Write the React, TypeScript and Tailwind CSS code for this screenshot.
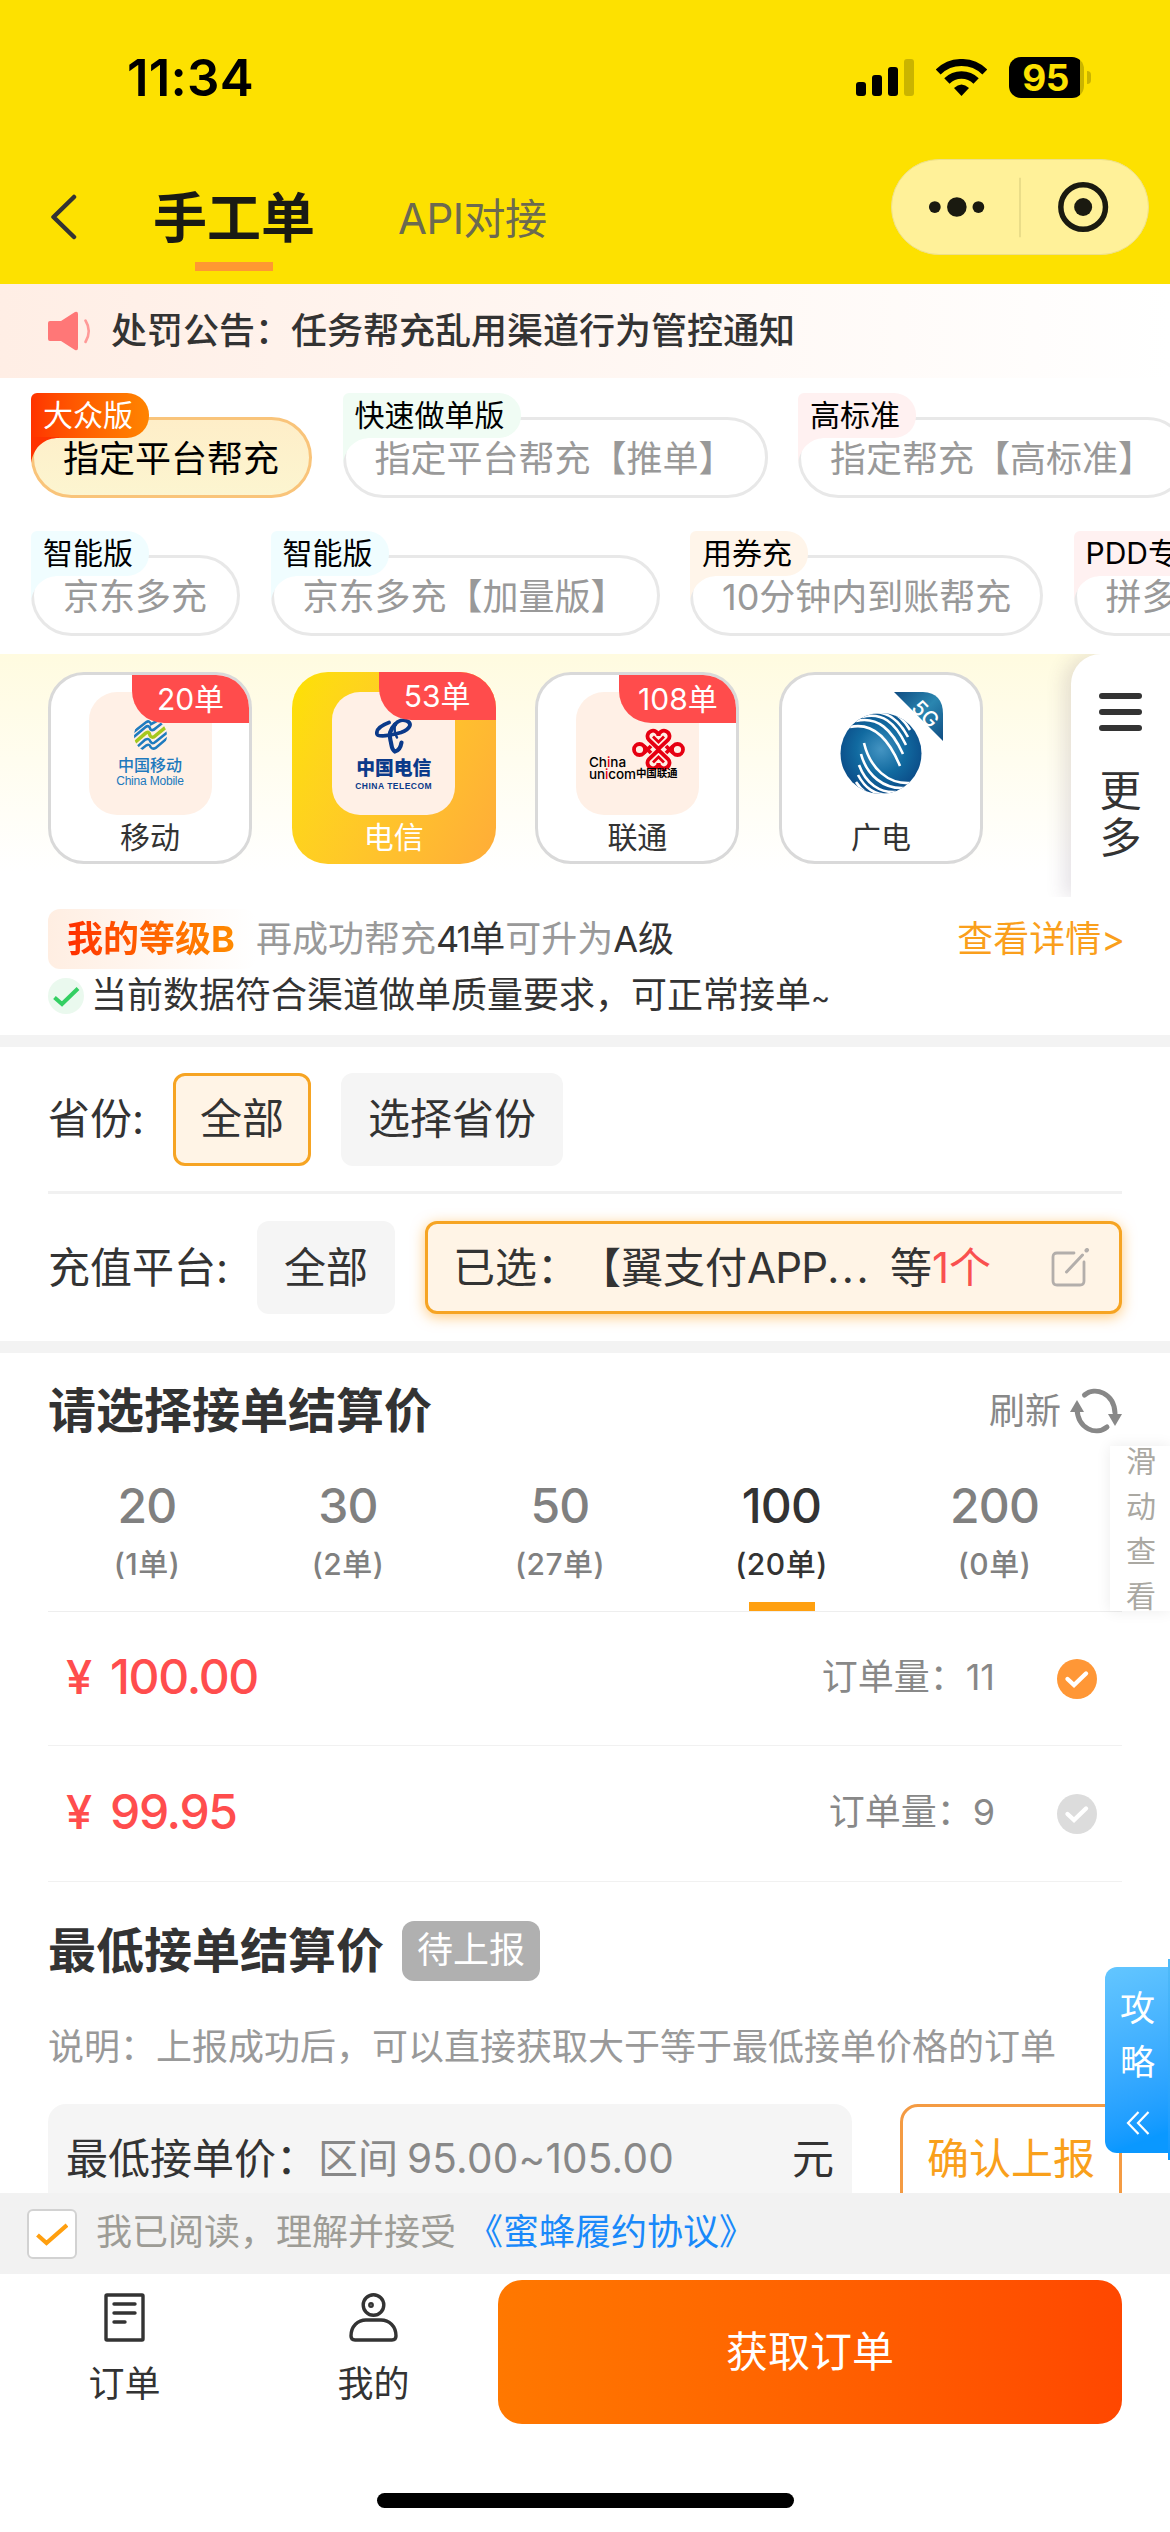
import { useState } from 'react';
import clsx from 'clsx';

interface Channel {
  tag: string;
  name: string;
  width: string;
  tagClass: string;
  tailClass: string;
  active?: boolean;
}

const channelsTop: Channel[] = [
  { tag: '大众版', name: '指定平台帮充', width: 'w-[281px]', tagClass: 'bg-linear-to-r from-[#ff3300] to-[#ff8400] text-white', tailClass: 'fill-[#ff3300]', active: true },
  { tag: '快速做单版', name: '指定平台帮充【推单】', width: 'w-[425px]', tagClass: 'bg-[#f0fcf4]', tailClass: 'fill-[#f0fcf4]' },
  { tag: '高标准', name: '指定帮充【高标准】', width: 'w-[390px]', tagClass: 'bg-[#fff1f1]', tailClass: 'fill-[#fff1f1]' },
];

const channelsBottom: Channel[] = [
  { tag: '智能版', name: '京东多充', width: 'w-[209px]', tagClass: 'bg-[#f0fdff]', tailClass: 'fill-[#f0fdff]' },
  { tag: '智能版', name: '京东多充【加量版】', width: 'w-[389px]', tagClass: 'bg-[#f0fdff]', tailClass: 'fill-[#f0fdff]' },
  { tag: '用券充', name: '10分钟内到账帮充', width: 'w-[353px]', tagClass: 'bg-[#fff5ea]', tailClass: 'fill-[#fff5ea]' },
  { tag: 'PDD专享', name: '拼多多充', width: 'w-[209px]', tagClass: 'bg-[#fff1f1]', tailClass: 'fill-[#fff1f1]' },
];

const amounts = [
  { value: 20, count: 1, width: 'w-[198px]' },
  { value: 30, count: 2, width: 'w-[204px]' },
  { value: 50, count: 27, width: 'w-[220px]' },
  { value: 100, count: 20, width: 'w-[223px]' },
  { value: 200, count: 0, width: 'w-[203px]' },
];

const prices = [
  { price: '100.00', orders: 11, height: 'h-[134px]' },
  { price: '99.95', orders: 9, height: 'h-[136px]' },
];

function StatusBar() {
  return (
    <div className="flex h-[154px] items-start justify-between pl-[127px] pr-[79px]">
      <div className="mt-[48px] text-[51px] font-semibold leading-[60px] tracking-[0.2px] text-black">11:34</div>
      <div className="mt-[57px] flex items-start">
        <svg className="mt-[2px] h-[37px] w-[58px]" viewBox="0 0 58 37">
          <rect x="0" y="23" width="10" height="14" rx="3" />
          <rect x="16" y="16" width="10" height="21" rx="3" />
          <rect x="32" y="8" width="10" height="29" rx="3" />
          <rect x="48" y="0" width="10" height="37" rx="3" fill="#cab400" />
        </svg>
        <svg className="ml-[22px] mt-[2px] h-[37px] w-[51px]" viewBox="0 0 51 37">
          <path d="M2.2 12.9A33.5 33.5 0 0 1 48.8 12.9" fill="none" stroke="#000" strokeWidth="7" />
          <path d="M10.9 21.9A21 21 0 0 1 40.1 21.9" fill="none" stroke="#000" strokeWidth="7.6" />
          <path d="M25.5 37L18 29Q25.500 22 33 29Z" />
        </svg>
        <div className="ml-[22px] h-[41px] w-[75px] rounded-[12px] bg-linear-to-r from-black from-95% to-[#cab400] to-95% pr-[2px] text-center text-[37px] font-bold leading-[41px] tracking-[-0.5px] text-[#fde100]">
          95
        </div>
        <div className="ml-[3px] mt-[14px] h-[13px] w-[4px] rounded-r-full bg-[#cab400]" />
      </div>
    </div>
  );
}

function Header() {
  return (
    <header className="h-[284px] shrink-0 bg-[#fde100]">
      <StatusBar />
      <div className="flex h-[130px] items-start pl-[50px] pr-[21px]">
        <svg className="mt-[40px] h-[46px] w-[28px]" viewBox="0 0 28 46" fill="none" stroke="#333" strokeWidth="4.500" strokeLinecap="round" strokeLinejoin="round">
          <path d="M24 3L3.500 23L24 43" />
        </svg>
        <div className="ml-[75px] mt-[31px] flex flex-col items-center">
          <div className="text-[54px] font-bold leading-[68px] text-[#1a1a14]">手工单</div>
          <div className="mt-[9px] h-[9px] w-[78px] bg-[#ff9832]" />
        </div>
        <div className="ml-[83px] mt-[39px] text-[42px] leading-[52px] tracking-[-0.5px] text-[#6c6a50]">API对接</div>
        <div className="ml-auto mt-[5px] flex h-[96px] w-[258px] items-center rounded-full border border-[#eee08a] bg-[#fff199]">
          <svg className="h-full w-full" viewBox="0 0 258 96">
            <g fill="#1a1a10">
              <circle cx="42" cy="48" r="6" />
              <circle cx="64.500" cy="48" r="10" />
              <circle cx="86.500" cy="48" r="6" />
              <circle cx="193.500" cy="48" r="9.200" />
            </g>
            <path d="M129 18V79" stroke="#e3d684" strokeWidth="1.500" />
            <circle cx="193.500" cy="48" r="22.800" fill="none" stroke="#1a1a10" strokeWidth="5.600" />
          </svg>
        </div>
      </div>
    </header>
  );
}

function ChannelChip({ channel }: { channel: Channel }) {
  return (
    <div className={clsx('relative shrink-0 pt-[24px]', channel.width)}>
      <div
        className={clsx(
          'h-[81px] overflow-hidden whitespace-nowrap rounded-full border-[3px] pl-[29px] text-[36px] leading-[78px]',
          channel.active ? 'border-[#f9c47a] bg-linear-to-b from-[#feeec8] to-[#fcf5d0] text-black' : 'border-[#e8e8e8] text-[#999]',
        )}
      >
        {channel.name}
      </div>
      <div className="absolute left-0 top-0">
        <div className={clsx('h-[45px] whitespace-nowrap rounded-r-[22px] rounded-tl-[6px] pl-[12px] pr-[16px] text-[30px] leading-[44px]', channel.tagClass, !channel.active && 'text-black')}>
          {channel.tag}
        </div>
        <svg className={clsx('-mt-px h-[26px] w-[28px]', channel.tailClass)} viewBox="0 0 28 26">
          <path d="M0 0H28V1C14 1 3 9 0 26Z" />
        </svg>
      </div>
    </div>
  );
}

function MobileLogo() {
  return (
    <div className="flex h-full flex-col items-center pt-[27px] text-[#2079bd]">
      <svg className="h-[33px] w-[33px]" viewBox="0 0 32 32" fill="none" strokeWidth="2.500">
        <clipPath id="mobileClip">
          <circle cx="16" cy="16" r="16" />
        </clipPath>
        <g clipPath="url(#mobileClip)" stroke="#1f7bbf">
          <path d="M-1 13L12 3Q15 1 16.500 5L22 2" />
          <path d="M-1 18L11 8Q14.500 5 16 10Q18 12 21 9L30 2" />
          <path d="M0 23.500L11 14Q14.500 11 15.500 16Q17.500 19.500 21 16L32 7" stroke="#a5c81e" strokeWidth="3.400" />
          <path d="M2 28L11 20Q14.500 18 16 22Q18 25 21 22L33 12.500" />
          <path d="M5 31L12 25.500Q15 24 16 27Q18 30 21 28L33 18" />
        </g>
      </svg>
      <div className="mt-[3px] text-[16px] font-medium leading-[20px]">中国移动</div>
      <div className="whitespace-nowrap font-['Liberation_Sans'] text-[12px] leading-[13px] tracking-[-0.2px]">China Mobile</div>
    </div>
  );
}

function TelecomLogo() {
  return (
    <div className="flex h-full flex-col items-center pt-[26px] text-[#0b3a8a]">
      <svg className="h-[36px] w-[38px]" viewBox="0 0 38 35" fill="none" stroke="#0b3a8a" strokeLinecap="round">
        <path d="M14 4C6 7 1 11 2 15.500C3 19 16 17 26 14C36 10 37 5 32 2.500C28 1 23 2 20 6" strokeWidth="3.800" />
        <path d="M20 6C14 12 14 17 15.500 22C17 27 16 31 20 33C25 32 26 27 26.500 24" strokeWidth="4.200" />
        <path d="M20 6C19 12 20 16 22 19" strokeWidth="2.400" />
      </svg>
      <div className="mt-[2px] text-[18.800px] font-black leading-[26px]">中国电信</div>
      <div className="whitespace-nowrap font-['Liberation_Sans'] text-[8.500px] font-bold leading-[9px] tracking-[0.5px]">CHINA TELECOM</div>
    </div>
  );
}

function UnicomLogo() {
  return (
    <div className="flex h-full flex-col pl-[13px] pt-[36px] text-black">
      <svg className="ml-[43px] h-[43px] w-[53px]" viewBox="0 0 53 43" fill="none" stroke="#e60012" strokeWidth="3.800">
        <path d="M26.500 21L17 12A5.500 5.500 0 1 1 26.500 8A5.500 5.500 0 1 1 36 12Z" />
        <path d="M26.500 22L17 31A5.500 5.500 0 1 0 26.500 35A5.500 5.500 0 1 0 36 31Z" />
        <path d="M21 8.500L26.500 14L32 8.500M21 34.500L26.500 29L32 34.500" strokeWidth="2.800" />
        <circle cx="7.500" cy="21.500" r="5.500" />
        <circle cx="45.500" cy="21.500" r="5.500" />
        <path d="M12 18L19 25M12 25L19 18M41 18L34 25M41 25L34 18" />
      </svg>
      <div className="-mt-[16px] text-[13.500px] font-medium leading-[14px]">
        Ch<span className="text-[#e60012]">i</span>na
      </div>
      <div className="-mt-[2px] flex items-center whitespace-nowrap text-[13.500px] font-medium leading-[14px] tracking-[-0.1px]">
        un<span className="text-[#e60012]">i</span>com<span className="text-[10.500px] font-bold">中国联通</span>
      </div>
    </div>
  );
}

function BroadcastLogo() {
  return (
    <svg className="h-[123px] w-[123px]" viewBox="0 0 123 123">
      <defs>
        <radialGradient id="globe" cx="0.5" cy="0.45" r="0.6">
          <stop offset="0" stopColor="#4494c2" />
          <stop offset="0.5" stopColor="#116aa0" />
          <stop offset="1" stopColor="#0a4683" />
        </radialGradient>
        <linearGradient id="corner" x1="0" y1="0" x2="1" y2="1">
          <stop offset="0" stopColor="#0f4c82" />
          <stop offset="0.5" stopColor="#2a86b0" />
          <stop offset="1" stopColor="#0f4c82" />
        </linearGradient>
        <clipPath id="globeClip">
          <circle cx="61" cy="61.500" r="40.500" />
        </clipPath>
      </defs>
      <circle cx="61" cy="61.500" r="40.500" fill="url(#globe)" />
      <g clipPath="url(#globeClip)" fill="none" stroke="#fff" strokeWidth="2.600">
        <path d="M30 35C52 30 68 45 80 74" />
        <path d="M36 29C58 24 72 38 83 62" />
        <path d="M42 25C62 20 75 30 86 53" />
        <path d="M50 21C66 18 78 26 88 45" />
        <path d="M60 18C72 18 82 24 90 38" />
        <path d="M44 51C50 76 68 93 92 91" />
        <path d="M41 62C47 84 64 97 84 96" />
        <path d="M39 73C46 92 60 101 76 100" />
        <path d="M38 83C45 96 54 103 70 103" />
        <path d="M36 90C42 99 48 104 60 106" />
      </g>
      <path d="M74 0H103Q123 1 123 22V49Z" fill="url(#corner)" />
      <text x="0" y="0" transform="translate(90 17) rotate(45)" fill="#fff" fontFamily="Inter" fontSize="21" fontWeight="500">5G</text>
    </svg>
  );
}

const carriers = [
  { name: '移动', orders: 20, logo: <MobileLogo /> },
  { name: '电信', orders: 53, logo: <TelecomLogo /> },
  { name: '联通', orders: 108, logo: <UnicomLogo /> },
  { name: '广电', orders: 0, logo: <BroadcastLogo /> },
];

function CarrierSection() {
  const [selected, setSelected] = useState('电信');

  return (
    <section className="flex h-[243px] bg-linear-to-b from-[#fffbe0] to-white to-90%">
      <div className="flex flex-1 gap-[39.700px] pl-[48px] pt-[18px]">
        {carriers.map((c) => {
          const active = c.name === selected;
          return (
            <button
              key={c.name}
              onClick={() => setSelected(c.name)}
              className={clsx(
                'relative flex h-[192px] w-[204px] shrink-0 flex-col items-center overflow-hidden rounded-[36px]',
                active ? 'bg-linear-115 from-[#fde100] to-[#ffac38] pt-[20px] text-white' : 'border-[3px] border-[#d9d9d9] bg-white pt-[17px] text-[#333]',
              )}
            >
              <div className={clsx('h-[123px] w-[123px] rounded-[28px] text-left', c.orders > 0 && 'bg-[#fff0e6]')}>{c.logo}</div>
              <div className="mt-[3px] text-[30px] leading-[38px]">{c.name}</div>
              {c.orders > 0 && (
                <div className="absolute right-0 top-0 h-[48px] w-[117px] rounded-bl-[32px] bg-[#ff4c4c] text-center text-[30px] leading-[48px] text-white">
                  {c.orders}单
                </div>
              )}
            </button>
          );
        })}
      </div>
      <div className="flex w-[99px] flex-col items-center rounded-tl-[30px] bg-white pt-[39px] text-[#333] [box-shadow:-8px_0_18px_rgba(70,50,80,0.13)] [clip-path:inset(0_0_0_-40px)]">
        <div className="flex flex-col gap-[10px]">
          <div className="h-[6px] w-[43px] rounded-full bg-[#333]" />
          <div className="h-[6px] w-[43px] rounded-full bg-[#333]" />
          <div className="h-[6px] w-[43px] rounded-full bg-[#333]" />
        </div>
        <div className="mt-[36px] w-[42px] text-[42px] leading-[47px]">更多</div>
      </div>
    </section>
  );
}

function LevelSection() {
  return (
    <section className="h-[138px] px-[48px] pt-[12px]">
      <div className="flex h-[60px] items-center text-[36px]">
        <div className="flex h-[60px] w-[208px] items-center rounded-[12px] bg-linear-to-r from-[#ffeee2] to-white pl-[19px]">
          <span className="bg-linear-to-r from-[#ff2a00] to-[#ff8a00] bg-clip-text font-bold leading-[54px] text-transparent">我的等级B</span>
        </div>
        <div className="text-[#999]">
          再成功帮充<span className="text-[#333]"><span className="tracking-[-2px]">41</span>单</span>可升为<span className="text-[#333]">A级</span>
        </div>
        <div className="ml-auto text-[#fa9f1c]">查看详情<span className="tracking-[-3px]">&gt;</span></div>
      </div>
      <div className="flex h-[54px] items-center">
        <svg className="h-[36px] w-[36px]" viewBox="0 0 36 36" fill="none">
          <circle cx="18" cy="18" r="18" fill="#eaf9ee" />
          <path d="M6.500 19.500L14 26L30 10.500" stroke="#34cf63" strokeWidth="4" />
        </svg>
        <div className="ml-[7px] text-[36px] leading-[48px] text-[#333]">当前数据符合渠道做单质量要求，可正常接单<span className="text-[29px]">~</span></div>
      </div>
    </section>
  );
}

function Filters() {
  return (
    <section className="border-y-[12px] border-[#f3f3f3] px-[48px] text-[42px] leading-[52px] text-[#333]">
      <div className="flex h-[147px] items-center border-b-[3px] border-[#f1f1f1]">
        <div className="w-[125px]">省份:</div>
        <button className="h-[93px] w-[138px] rounded-[12px] border-[3px] border-[#f6a423] bg-[#fff4e6]">全部</button>
        <button className="ml-[30px] h-[93px] w-[222px] rounded-[12px] bg-[#f5f5f5]">选择省份</button>
      </div>
      <div className="flex h-[147px] items-center">
        <div className="w-[209px]">充值平台:</div>
        <button className="h-[93px] w-[138px] rounded-[12px] bg-[#f5f5f5]">全部</button>
        <div className="ml-[30px] flex h-[93px] flex-1 items-center whitespace-nowrap rounded-[12px] border-[3px] border-[#f6a423] bg-[#fff4e6] pl-[25px] shadow-[0_3px_14px_rgba(255,152,0,0.5)]">
          <span>已选：</span>
          <span className="w-[311px]">【翼支付<span className="tracking-[-0.8px]">APP</span><span className="tracking-[2.500px]">...</span></span>
          <span>等<span className="text-[#f9504f]">1个</span></span>
          <svg className="ml-auto mr-[29px] h-[39px] w-[39px]" viewBox="0 0 39 39" fill="none" stroke="#b3aeab" strokeWidth="2.800" strokeLinecap="round">
            <path d="M23 5H6Q2 5 2 9V33Q2 37 6 37H29Q33 37 33 33V14" />
            <path d="M15.500 24L31.500 7" strokeWidth="3" />
            <path d="M35.500 2.500L36 2" strokeWidth="4" />
          </svg>
        </div>
      </div>
    </section>
  );
}

function RefreshIcon() {
  return (
    <svg className="ml-[9px] h-[48px] w-[52px]" viewBox="0 0 52 48">
      <g fill="none" stroke="#888" strokeWidth="5" strokeLinecap="round">
        <path d="M14.500 8C25 -1 44 6 45 26" />
        <path d="M37 40C26 49 8 42 7 22" />
      </g>
      <path d="M38 27H52L45 39Z" fill="#888" />
      <path d="M0 25H14L7 13Z" fill="#888" />
    </svg>
  );
}

function PriceSection() {
  const [amount, setAmount] = useState(100);
  const [price, setPrice] = useState('100.00');

  return (
    <section className="relative px-[48px]">
      <div className="flex h-[116px] items-center">
        <h2 className="text-[48px] font-bold leading-[60px] text-[#333]">请选择接单结算价</h2>
        <div className="ml-auto text-[36px] text-[#888]">刷新</div>
        <RefreshIcon />
      </div>
      <div className="flex h-[143px] border-b border-[#eee]">
        {amounts.map((a) => (
          <button
            key={a.value}
            onClick={() => setAmount(a.value)}
            className={clsx('flex h-[142px] flex-col items-center font-medium', a.width, a.value === amount ? 'text-[#333]' : 'text-[#808080]')}
          >
            <span className="mt-[7px] text-[48px] leading-[60px] tracking-[-0.8px]">{a.value}</span>
            <span className="mt-[10px] text-[30px] leading-[36px] tracking-[0.5px]">({a.count}单)</span>
            {a.value === amount && <span className="mt-auto h-[9px] w-[66px] bg-[#ffa010]" />}
          </button>
        ))}
      </div>
      {/* swipe hint over the amount tabs */}
      <div className="absolute right-0 top-[93px] flex h-[165px] w-[60px] justify-center bg-white pl-[2px] text-[30px] leading-[45px] text-[#aaa8a2] shadow-[0_0_14px_rgba(0,0,0,0.08)]">
        <div className="-mt-[7px] w-[30px]">滑动查看</div>
      </div>
      {prices.map((p) => (
        <div key={p.price} onClick={() => setPrice(p.price)} className={clsx('flex items-center border-b border-[#f1f1f1] pl-[18px] pr-[25px]', p.height)}>
          <div className="-mt-[3px] w-[44px] text-[47px] font-medium leading-[60px] text-[#ff4d4d]">¥</div>
          <div className="-mt-[3px] text-[48px] font-medium leading-[60px] tracking-[-1.300px] text-[#ff4d4d]">{p.price}</div>
          <div className="-mt-[4px] ml-auto mr-[62px] text-[36px] leading-[48px] text-[#888]">
            订单量：{p.orders}
          </div>
          <svg className="h-[40px] w-[40px]" viewBox="0 0 40 40" fill="none">
            <circle cx="20" cy="20" r="20" fill={p.price === price ? '#ff9736' : '#dcdcdc'} />
            <path d="M10.500 20L17 26L29 14.500" stroke="#fff" strokeWidth="4.400" strokeLinecap="round" />
          </svg>
        </div>
      ))}
    </section>
  );
}

function ReportSection() {
  return (
    <section className="px-[48px]">
      <div className="flex h-[138px] items-center">
        <h2 className="text-[48px] font-bold leading-[60px] text-[#333]">最低接单结算价</h2>
        <span className="ml-[18px] h-[60px] w-[138px] rounded-[12px] bg-[#b0b0b0] text-center text-[36px] leading-[58px] text-white">待上报</span>
      </div>
      <p className="whitespace-nowrap pt-[3px] text-[36px] leading-[48px] text-[#999]">说明：上报成功后，可以直接获取大于等于最低接单价格的订单</p>
      <div className="mt-[33px] flex justify-between">
        <div className="flex h-[120px] w-[804px] items-start whitespace-nowrap rounded-[18px] bg-[#f5f5f5] px-[18px] pt-[29px] text-[42px] leading-[52px] text-[#333]">
          <span>最低接单价：</span>
          <span className="text-[40px] text-[#888]">区间<span className="ml-[9px] text-[40.500px] tracking-[0.2px]">95.00~105.00</span></span>
          <span className="ml-auto">元</span>
        </div>
        <button className="flex h-[120px] w-[222px] justify-center rounded-[18px] border-[3px] border-[#f49b43] pt-[26px] text-[42px] leading-[52px] text-[#f9a01b]">确认上报</button>
      </div>
    </section>
  );
}

function GuideTab() {
  return (
    <div className="absolute right-0 top-[1959px] flex items-center">
      <div className="flex h-[186px] w-[63px] flex-col items-center rounded-l-[12px] bg-linear-160 from-[#63c6ff] to-[#0a98ff] to-90% pl-[2px] pt-[14px] text-[35px] leading-[54px] text-white">
        <div className="w-[35px]">攻略</div>
        <svg className="mt-[22px] h-[24px] w-[24px]" viewBox="0 0 24 24" fill="none" stroke="#fff" strokeWidth="2.200">
          <path d="M12.500 1L2 12L12.500 23M22.500 1L12 12L22.500 23" />
        </svg>
      </div>
      <div className="h-[201px] w-[2px] bg-linear-to-b from-[#51bbf8] to-[#0a98ff]" />
    </div>
  );
}

function Footer() {
  return (
    <footer className="h-[339px] shrink-0 bg-white">
      <div className="flex h-[81px] items-center bg-[#f2f2f2] pl-[27px] text-[36px] leading-[48px]">
        <div className="flex h-[50px] w-[50px] items-center justify-center rounded-[6px] border-2 border-[#d2d2d2] bg-white">
          <svg className="h-[26px] w-[32px]" viewBox="0 0 32 26" fill="none" stroke="#ff9f0f" strokeWidth="4.200">
            <path d="M1.500 14L10.500 22L31 4" />
          </svg>
        </div>
        <div className="-mt-[4px] ml-[19px] text-[#9d9c96]">我已阅读，理解并接受</div>
        <div className="-mt-[4px] ml-[11px] text-[#1989fa]">《蜜蜂履约协议》</div>
      </div>
      <div className="flex pr-[48px] pt-[6px] text-[#333]">
        <div className="flex w-[249px] flex-col items-center pt-[13px]">
          <svg className="h-[49px] w-[41px]" viewBox="0 0 41 49" fill="none" stroke="#333" strokeWidth="3.400" strokeLinecap="round" strokeLinejoin="round">
            <rect x="2" y="2" width="37" height="45" rx="1" />
            <path d="M10 11H31M10 20H31M10 29H21" />
          </svg>
          <span className="mt-[18px] text-[36px] leading-[48px]">订单</span>
        </div>
        <div className="flex w-[249px] flex-col items-center pt-[13px]">
          <svg className="h-[49px] w-[49px]" viewBox="0 0 49 49" fill="none" stroke="#333" strokeWidth="3.400">
            <circle cx="24.500" cy="12" r="10.300" />
            <circle cx="22" cy="12" r="1.200" />
            <path d="M2 43C2 33 9 27 17 27H32C40 27 47 33 47 43Q47 47 43 47H6Q2 47 2 43Z" />
          </svg>
          <span className="mt-[18px] text-[36px] leading-[48px]">我的</span>
        </div>
        <button className="h-[144px] w-[624px] rounded-[24px] bg-linear-to-r from-[#ff7800] to-[#ff4700] text-[42px] leading-[52px] text-white">获取订单</button>
      </div>
      <div className="mx-auto mt-[69px] h-[15px] w-[417px] rounded-full bg-black" />
    </footer>
  );
}

export default function App() {
  return (
    <div className="relative flex h-[2532px] w-[1170px] flex-col overflow-hidden bg-white font-['Inter','Noto_Sans_CJK_SC',sans-serif]">
      <Header />
      <main className="min-h-0 flex-1 overflow-hidden">
        <div className="flex h-[94px] items-center bg-linear-to-r from-[#ffeee5] to-white pl-[47px]">
          <svg className="h-[40px] w-[44px]" viewBox="0 0 44 40">
            <path d="M1 12Q1 10 3 10H14L28 1Q31 0 31 3V37Q31 40 28 39L14 30H3Q1 30 1 28Z" fill="#ff7777" />
            <path d="M38.500 9.500Q45 20 38.500 31" fill="none" stroke="#ff9a98" strokeWidth="2.600" strokeLinecap="round" />
          </svg>
          <div className="ml-[20px] text-[36px] font-medium leading-[48px] text-[#333]">处罚公告：任务帮充乱用渠道行为管控通知</div>
        </div>
        <div className="h-[276px] overflow-hidden pl-[31px] pt-[15px]">
          <div className="flex h-[138px] gap-[30.500px]">
            {channelsTop.map((c) => <ChannelChip key={c.name} channel={c} />)}
          </div>
          <div className="flex gap-[30.500px]">
            {channelsBottom.map((c) => <ChannelChip key={c.name} channel={c} />)}
          </div>
        </div>
        <CarrierSection />
        <LevelSection />
        <Filters />
        <PriceSection />
        <ReportSection />
      </main>
      <Footer />
      <GuideTab />
    </div>
  );
}
